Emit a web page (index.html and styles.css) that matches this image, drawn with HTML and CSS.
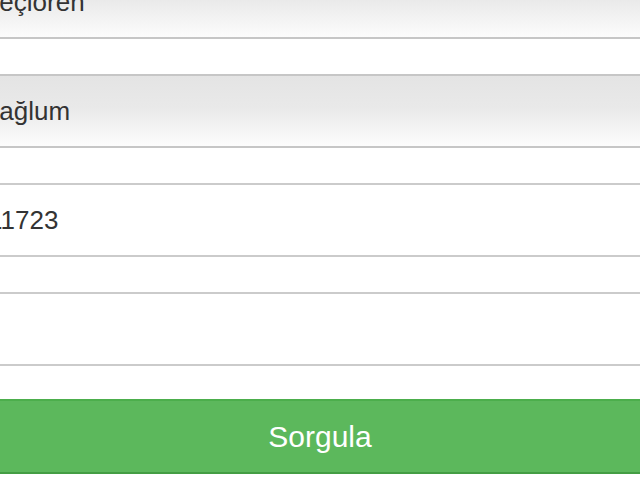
FILE: index.html
```html
<!DOCTYPE html>
<html lang="tr">
<head>
<meta charset="utf-8">
<title>Sorgula</title>
<link rel="stylesheet" href="styles.css">
</head>
<body>
<form class="form">
  <select class="field field-select">
    <option>Keçiören</option>
  </select>
  <select class="field field-select">
    <option>Bağlum</option>
  </select>
  <input class="field field-input" type="text" value="11723">
  <input class="field field-input" type="text">
  <button class="btn-submit" type="button">Sorgula</button>
</form>
</body>
</html>
```

FILE: styles.css
```css
html, body {
  margin: 0;
  padding: 0;
  overflow: hidden;
  background: #ffffff;
}

body {
  width: 640px;
  height: 480px;
  font-family: "Liberation Sans", Arial, Helvetica, sans-serif;
}

.form {
  display: flex;
  flex-direction: column;
  gap: 35px;
  width: 700px;
  margin: -35px 0 0 -30px;
}

.field {
  display: block;
  box-sizing: border-box;
  width: 100%;
  height: 74px;
  margin: 0;
  border: 2px solid #c9c9c9;
  border-radius: 8px;
  font-family: inherit;
  font-size: 26px;
  color: #333333;
  outline: none;
}

.field-select {
  -webkit-appearance: none;
  appearance: none;
  padding: 0 0 0 10px;
  background: linear-gradient(to bottom, #e4e4e4 0%, #e9e9e9 45%, #fcfcfc 100%);
  border-color: #c6c6c6;
}

.field-input {
  padding: 0 0 0 16px;
  background: #ffffff;
  border-color: #cbcbcb;
}

.btn-submit {
  display: block;
  box-sizing: border-box;
  width: 100%;
  height: 75px;
  margin: -2px 0 0 0;
  border: 2px solid #4cae4c;
  border-bottom-color: #449d44;
  border-radius: 8px;
  background: #5cb85c;
  color: #ffffff;
  font-family: inherit;
  font-size: 30px;
  cursor: pointer;
}
```
